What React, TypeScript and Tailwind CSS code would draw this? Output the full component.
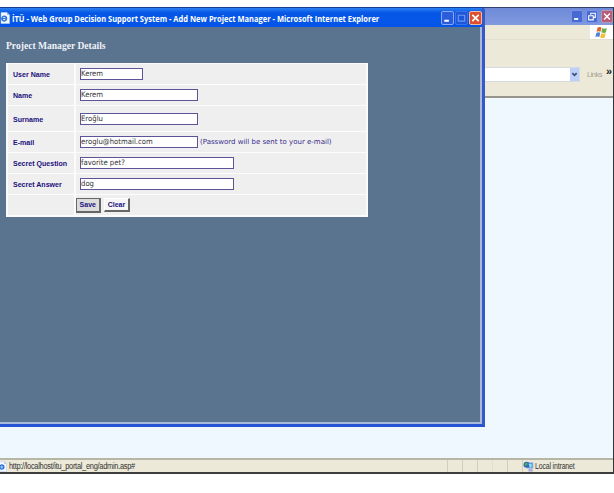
import type { ReactNode } from "react"

type Field = {
  label: string
  value: string
  width: string
  rowHeight: string
  note?: string
}

const fields: Field[] = [
  { label: "User Name", value: "Kerem", width: "w-[63px]", rowHeight: "h-[20px]" },
  { label: "Name", value: "Kerem", width: "w-[118px]", rowHeight: "h-[20px]" },
  { label: "Surname", value: "Eroğlu", width: "w-[118px]", rowHeight: "h-[25px]" },
  { label: "E-mail", value: "eroglu@hotmail.com", width: "w-[118px]", rowHeight: "h-[20px]", note: "(Password will be sent to your e-mail)" },
  { label: "Secret Question", value: "favorite pet?", width: "w-[154px]", rowHeight: "h-[20px]" },
  { label: "Secret Answer", value: "dog", width: "w-[154px]", rowHeight: "h-[20px]" },
]

function PageIcon({ className }: { className: string }) {
  return (
    <svg viewBox="0 0 10 12" className={`shrink-0 ${className}`}>
      <path d="M1 0.5h6l2.5 2.5v8.5H1z" fill="#f4f8ff" stroke="#b9cdf2" strokeWidth="0.6" />
      <path d="M7 0.5v2.5h2.5" fill="#9db9ea" />
      <circle cx="4.2" cy="6.6" r="2.3" fill="none" stroke="#2b74d8" strokeWidth="1.5" />
      <path d="M2 6.6h4.4" stroke="#2b74d8" strokeWidth="1.1" />
    </svg>
  )
}

function WindowsFlag() {
  return (
    <svg viewBox="0 0 12 12" className="h-[13px] w-[13px]">
      <path d="M2.4 1.4q2-1 3.6 0l-.9 4q-1.7-1-3.6 0z" fill="#e2622e" />
      <path d="M6.7 1.9q2 1 4.3.1l-1 4q-2 .8-4.1-.2z" fill="#6bb045" />
      <path d="M1.3 6.2q2-1 3.6 0l-.9 4q-1.7-1-3.6 0z" fill="#4a83d8" />
      <path d="M5.7 6.7q2 1 4.2.1l-1 4q-2 .8-4.1-.1z" fill="#f3bf3a" />
    </svg>
  )
}

function IntranetIcon() {
  return (
    <svg viewBox="0 0 12 12" className="h-[11px] w-[11px] shrink-0">
      <path d="M4 1.5h7v6.500H4z" fill="#4b8fd9" stroke="#b8cde6" strokeWidth="0.8" />
      <path d="M6 8.500h4l1 3H6z" fill="#a9a9da" />
      <circle cx="3.8" cy="4" r="3.2" fill="#2f66b5" />
      <path d="M2 2.500q2-1.500 3 0t-1 2.500-2-.5z" fill="#4fa86a" />
      <path d="M6 3h3.500v4h-2z" fill="#8fe0f8" />
    </svg>
  )
}

function TitleButton({ style, children }: { style: string; children: ReactNode }) {
  return (
    <div className={`flex items-center justify-center rounded-[2px] border ${style}`}>
      <svg viewBox="0 0 12 12" className="h-full w-full" fill="none">
        {children}
      </svg>
    </div>
  )
}

function BrowserWindow() {
  return (
    <div className="flex h-[467px] w-full flex-col border-t border-r border-b-2 border-t-[#33406b] border-r-[#34363c] border-b-[#3d3d3d] bg-[#f0f8ff]">
      <div className="flex h-[17px] shrink-0 items-center justify-end gap-[3px] bg-linear-to-b from-[#6f8bd8] to-[#8099df]">
        <TitleButton style="h-[13px] w-[12px] border-[#7892e4] bg-[#4669d2]">
          <path d="M2.5 9h5" stroke="#fff" strokeWidth="2.2" />
        </TitleButton>
        <TitleButton style="h-[13px] w-[12px] border-[#7892e4] bg-[#4669d2]">
          <path d="M4.5 4V2h5.500v5H8M2 5h5.500v5H2z" stroke="#fff" strokeWidth="1.3" />
        </TitleButton>
        <TitleButton style="h-[13px] w-[12px] border-[#b697b8] bg-[#b65c78]">
          <path d="M2.5 2.5l7 7M9.5 2.5l-7 7" stroke="#fff" strokeWidth="1.7" />
        </TitleButton>
      </div>
      <div className="flex h-[15px] shrink-0 justify-end border-b border-[#e2dfcd] bg-[#ece9d8]">
        <div className="flex w-[23px] items-center justify-center bg-white">
          <WindowsFlag />
        </div>
      </div>
      <div className="h-[27px] shrink-0 bg-[#ece9d8]" />
      <div className="flex h-[15px] shrink-0 items-center bg-[#ece9d8]">
        <div className="flex h-[15px] w-[580px] shrink-0 justify-end border border-[#d5dbe0] bg-white">
          <div className="flex w-[9px] items-center justify-center bg-[#bfd0f8]">
            <svg viewBox="0 0 8 8" className="h-[7px] w-[7px]" fill="none">
              <path d="M1.5 2.5l2.5 2.500 2.5-2.500" stroke="#3d5185" strokeWidth="2" />
            </svg>
          </div>
        </div>
        <span className="ml-[7px] w-[14px] text-[7.5px] leading-none tracking-[-0.5px] text-[#a5a18f]">Links</span>
        <span className="-mt-[7px] ml-[5px] text-[11px] leading-none font-bold text-[#222]">»</span>
      </div>
      <div className="h-[16px] shrink-0 border-b-2 border-[#96948b] bg-[#ece9d8]" />
      <div className="flex-1" />
      <div className="flex h-[14px] shrink-0 items-center border-t-2 border-[#b6b6a6] bg-[#ece9d8]">
        <PageIcon className="-ml-[2px] h-[11px] w-[9px]" />
        <span className="ml-[2px] w-[438px] shrink-0 pt-px">
          <span className="block w-max origin-left scale-x-[0.87] text-[8.5px] leading-none tracking-[-0.3px] whitespace-nowrap text-[#333]">
            http://localhost/itu_portal_eng/admin.asp#
          </span>
        </span>
        <div className="flex h-full gap-[14px]">
          <div className="h-full w-px bg-[#d2cfbe]" />
          <div className="h-full w-px bg-[#d2cfbe]" />
          <div className="h-full w-px bg-[#d2cfbe]" />
          <div className="h-full w-px bg-[#e2dfce]" />
          <div className="h-full w-px bg-[#d2cfbe]" />
          <div className="h-full w-px bg-[#d2cfbe]" />
        </div>
        <IntranetIcon />
        <span className="ml-px origin-left scale-x-[0.82] pt-px text-[8.5px] leading-none tracking-[-0.2px] whitespace-nowrap text-[#333]">Local intranet</span>
      </div>
    </div>
  )
}

function FieldRow({ field }: { field: Field }) {
  return (
    <div className={`flex gap-[2px] ${field.rowHeight}`}>
      <div className="flex w-[66px] items-center bg-[#efefef] pt-[2px] pl-[5px]">
        <span className="origin-left scale-x-[0.94] text-[7.5px] leading-none font-bold whitespace-nowrap text-[#20107c]">{field.label}</span>
      </div>
      <div className="flex flex-1 items-center bg-[#efefef] pl-[4px]">
        <div className={`flex h-[12px] items-center border border-[#5c5499] bg-white ${field.width}`}>
          <span className="origin-left scale-x-[0.92] font-['DejaVu_Sans'] text-[7.5px] leading-none whitespace-nowrap text-[#333]">{field.value}</span>
        </div>
        {field.note && (
          <span className="ml-[2px] font-['DejaVu_Sans'] text-[7px] leading-none whitespace-nowrap text-[#382b8c]">{field.note}</span>
        )}
      </div>
    </div>
  )
}

function ManagerDialog() {
  return (
    <div className="absolute top-[7px] left-0 flex h-[420px] w-[485px] flex-col rounded-tr-[4px] border-t border-r-[3px] border-b-[3px] border-t-[#173b91] border-r-[#3858c8] border-b-[#2852d4] bg-[#5a738f]">
      <div className="flex h-[19px] shrink-0 items-center bg-linear-to-b from-[#2b80f2] via-[#0657e6] via-25% to-[#0355ea] pt-px">
        <PageIcon className="h-[12px] w-[10px]" />
        <span className="ml-[2px] w-[429px] shrink-0 pt-px">
          <span className="block w-max origin-left scale-x-[0.79] font-['Open_Sans'] text-[9.5px] leading-[12px] font-bold whitespace-nowrap text-white">
            İTÜ - Web Group Decision Support System - Add New Project Manager - Microsoft Internet Explorer
          </span>
        </span>
        <div className="flex gap-px">
          <TitleButton style="h-[14px] w-[13px] border-[#8aa9f2] bg-[#2a5ddd]">
            <path d="M2.5 9h5" stroke="#fff" strokeWidth="2.2" />
          </TitleButton>
          <TitleButton style="h-[14px] w-[13px] border-[#3c71e8] bg-[#1e56da]">
            <path d="M2.5 3h7v6.500h-7z" stroke="#6f95ee" strokeWidth="1.3" />
          </TitleButton>
          <TitleButton style="h-[14px] w-[13px] border-[#f0b9a6] bg-[#dc5030]">
            <path d="M2.5 2.5l7 7M9.5 2.5l-7 7" stroke="#fff" strokeWidth="1.8" />
          </TitleButton>
        </div>
      </div>
      <div className="flex-1 border-r-2 border-b-2 border-[#a9b9dc] pt-[12px] pl-[6px]">
        <h1 className="h-[24px] w-max origin-left scale-x-[0.87] font-['Liberation_Serif'] text-[11px] leading-[12px] font-bold whitespace-nowrap text-[#eef2f6]">
          Project Manager Details
        </h1>
        <div className="flex h-[154px] w-[362px] flex-col gap-px border-t border-r-2 border-b-2 border-l-2 border-[#f8fcfc] bg-[#fcfcfc]">
          {fields.map((field) => (
            <FieldRow key={field.label} field={field} />
          ))}
          <div className="flex flex-1 gap-[2px]">
            <div className="w-[66px] bg-[#efefef]" />
            <div className="flex flex-1 items-center gap-[3px] bg-[#efefef]">
              <button className="h-[15px] w-[25px] border border-r-2 border-b-2 border-[#666] bg-[#dcdcdc] text-[7.5px] leading-none font-bold text-[#20107c]">
                <span className="inline-block scale-x-[0.93]">Save</span>
              </button>
              <button className="h-[14px] w-[26px] border border-r-2 border-b-2 border-t-white border-r-[#666] border-b-[#666] border-l-white bg-[#f6f6f6] text-[7.5px] leading-none font-bold text-[#20107c]">
                <span className="inline-block scale-x-[0.93]">Clear</span>
              </button>
            </div>
          </div>
        </div>
      </div>
    </div>
  )
}

function App() {
  return (
    <div className="relative h-[493px] w-[614px] overflow-hidden bg-white pt-[7px] font-['Liberation_Sans',sans-serif]">
      <BrowserWindow />
      <ManagerDialog />
    </div>
  )
}

export default App
